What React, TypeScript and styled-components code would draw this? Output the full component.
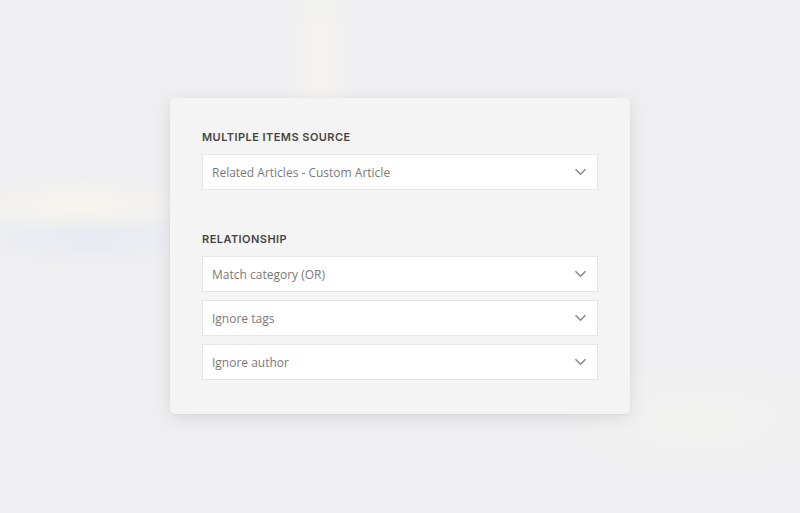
import styled, { createGlobalStyle } from "styled-components";

const GlobalStyle = createGlobalStyle`
	* {
		box-sizing: border-box;
	}
	body {
		margin: 0;
		background-color: #efeff1;
		font-family: "Open Sans", "Liberation Sans", sans-serif;
	}
`;

// faint rainbow glare behind the card
const Backdrop = styled.div`
	min-height: 100vh;
	display: flex;
	align-items: center;
	justify-content: center;
	background:
		radial-gradient(ellipse 110px 28px at 80px 205px, rgba(252, 250, 232, 0.55), transparent),
		radial-gradient(ellipse 130px 26px at 90px 238px, rgba(226, 230, 244, 0.6), transparent),
		radial-gradient(ellipse 36px 130px at 320px 60px, rgba(250, 248, 240, 0.5), transparent),
		radial-gradient(ellipse 150px 60px at 700px 420px, rgba(244, 244, 238, 0.5), transparent),
		#efeff1;
`;

const Card = styled.div`
	width: 460px;
	margin-top: -1px;
	padding: 32px 32px 34px;
	background-color: #f4f4f4;
	border-radius: 5px;
	box-shadow: 0 4px 18px rgba(0, 0, 0, 0.09), 0 1px 3px rgba(0, 0, 0, 0.05);
	display: flex;
	flex-direction: column;
	gap: 42px;
`;

const Section = styled.section`
	display: flex;
	flex-direction: column;
`;

const Label = styled.h3`
	margin: 0 0 10px;
	height: 14px;
	line-height: 14px;
	font-family: Inter, "Liberation Sans", sans-serif;
	font-size: 11px;
	font-weight: 600;
	letter-spacing: 0.45px;
	color: #454545;
	text-transform: uppercase;
`;

const SelectList = styled.div`
	display: flex;
	flex-direction: column;
	gap: 8px;
`;

const Select = styled.div`
	height: 36px;
	display: flex;
	align-items: center;
	justify-content: space-between;
	padding: 0 10px 0 9px;
	background-color: #fff;
	border: 1px solid #e5e5e5;
	font-size: 12px;
	color: #7a7a7a;
`;

const Chevron = () => (
	<svg width="13" height="8" viewBox="0 0 13 8" fill="none">
		<path d="M1.5 1.2 L6.5 6.2 L11.5 1.2" stroke="#8a8a8a" strokeWidth="1.6" />
	</svg>
);

const sections = [
	{ title: "Multiple items source", options: ["Related Articles - Custom Article"] },
	{ title: "Relationship", options: ["Match category (OR)", "Ignore tags", "Ignore author"] },
];

function App() {
	return (
		<Backdrop>
			<GlobalStyle />
			<Card>
				{sections.map((section) => (
					<Section key={section.title}>
						<Label>{section.title}</Label>
						<SelectList>
							{section.options.map((option) => (
								<Select key={option}>
									{option}
									<Chevron />
								</Select>
							))}
						</SelectList>
					</Section>
				))}
			</Card>
		</Backdrop>
	);
}

export default App;
